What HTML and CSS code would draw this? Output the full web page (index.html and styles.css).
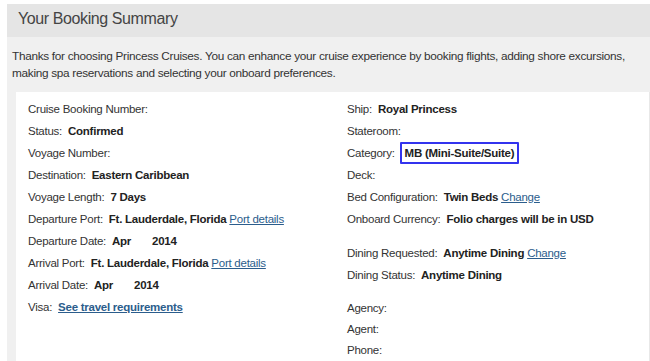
FILE: index.html
```html
<!DOCTYPE html>
<html lang="en">

<head>
    <meta charset="UTF-8" />
    <title>Your Booking Summary</title>
    <link rel="stylesheet" href="styles.css">
</head>

<body>
    <div class="panel">
        <h2 class="panel-title">Your Booking Summary</h2>
        <div class="panel-body">
            <p class="intro">Thanks for choosing Princess Cruises. You can enhance your cruise experience by booking flights, adding shore excursions, making spa reservations and selecting your onboard preferences.</p>

            <div class="summary">
                <div class="col col-left">
                    <div class="row"><span class="label">Cruise Booking Number:</span></div>
                    <div class="row"><span class="label">Status:</span> <b>Confirmed</b></div>
                    <div class="row"><span class="label">Voyage Number:</span></div>
                    <div class="row"><span class="label">Destination:</span> <b>Eastern Caribbean</b></div>
                    <div class="row"><span class="label">Voyage Length:</span> <b>7 Days</b></div>
                    <div class="row"><span class="label">Departure Port:</span> <b>Ft. Lauderdale, Florida</b> <a href="#">Port details</a></div>
                    <div class="row"><span class="label">Departure Date:</span> <b>Apr <span class="day"></span>2014</b></div>
                    <div class="row"><span class="label">Arrival Port:</span> <b>Ft. Lauderdale, Florida</b> <a href="#">Port details</a></div>
                    <div class="row"><span class="label">Arrival Date:</span> <b>Apr <span class="day"></span>2014</b></div>
                    <div class="row"><span class="label">Visa:</span> <a href="#" class="strong">See travel requirements</a></div>
                </div>

                <div class="col col-right">
                    <div class="group">
                        <div class="row"><span class="label">Ship:</span> <b>Royal Princess</b></div>
                        <div class="row"><span class="label">Stateroom:</span></div>
                        <div class="row"><span class="label">Category:</span> <b class="highlight">MB (Mini-Suite/Suite)</b></div>
                        <div class="row"><span class="label">Deck:</span></div>
                        <div class="row"><span class="label">Bed Configuration:</span> <b>Twin Beds</b> <a href="#">Change</a></div>
                        <div class="row"><span class="label">Onboard Currency:</span> <b>Folio charges will be in USD</b></div>
                    </div>
                    <div class="group">
                        <div class="row"><span class="label">Dining Requested:</span> <b>Anytime Dining</b> <a href="#">Change</a></div>
                        <div class="row"><span class="label">Dining Status:</span> <b>Anytime Dining</b></div>
                    </div>
                    <div class="group group-last">
                        <div class="row"><span class="label">Agency:</span></div>
                        <div class="row"><span class="label">Agent:</span></div>
                        <div class="row"><span class="label">Phone:</span></div>
                    </div>
                </div>
            </div>
        </div>
    </div>
</body>

</html>
```

FILE: styles.css
```css
html,
body {
    height: 100%;
}

body {
    font-family: "Liberation Sans", Arial, sans-serif;
    background-color: #ffffff;
    margin: 0;
    padding: 4px 0 0 7px;
    color: #333333;
    overflow: hidden;
    box-sizing: border-box;
    display: flex;
    flex-direction: column;
}

.panel {
    flex: 1;
    display: flex;
    flex-direction: column;
    background-color: #f0f0f0;
    overflow: hidden;
}

.panel-title {
    margin: 0;
    padding: 6px 11px 0;
    height: 27px;
    background-color: #e5e5e5;
    font-size: 16px;
    letter-spacing: -0.4px;
    font-weight: normal;
    color: #444444;
}

.panel-body {
    flex: 1;
    display: flex;
    flex-direction: column;
    padding: 11px 0 0 9px;
}

.intro {
    margin: 0 0 0 -4px;
    font-size: 11.8px;
    letter-spacing: -0.3px;
    line-height: 17px;
    color: #333333;
}

.summary {
    flex: 1;
    display: flex;
    background-color: #ffffff;
    margin-top: 10px;
    padding: 6px 0 0 12px;
    border-right: 1px solid #e8e8e8;
}

.col-left {
    flex: none;
    width: 319px;
}

.col-right {
    flex: 1;
}

.group {
    margin-bottom: 12px;
}

.group-last {
    margin-bottom: 0;
}

.group-last .row {
    line-height: 21px;
}

.row {
    font-size: 11.5px;
    letter-spacing: -0.25px;
    line-height: 22px;
    white-space: nowrap;
}

.label {
    margin-right: 3px;
}

.row b {
    color: #222222;
}

.row a {
    color: #2b5d8c;
    text-decoration: underline;
}

.row a.strong {
    font-weight: bold;
}

.day {
    display: inline-block;
    width: 18px;
}

.highlight {
    border: 2px solid #3333ee;
    border-radius: 1px;
    padding: 3px 3px;
    margin-left: -1px;
}
```
